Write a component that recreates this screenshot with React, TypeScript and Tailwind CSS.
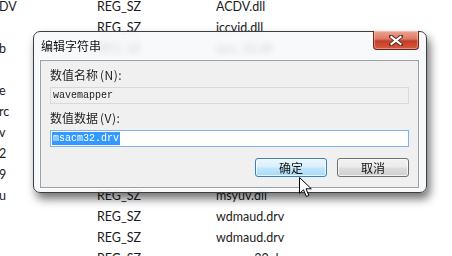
import React from "react";

const rows: [string, string, string][] = [
  ["DV", "REG_SZ", "ACDV.dll"],
  ["", "REG_SZ", "iccvid.dll"],
  ["b", "REG_SZ", "ipm_32.dll"],
  ["", "", ""],
  ["e", "", ""],
  ["rc", "", ""],
  ["v", "", ""],
  ["2", "", ""],
  ["9", "", ""],
  ["u", "REG_SZ", "msyuv.dll"],
  ["", "REG_SZ", "wdmaud.drv"],
  ["", "REG_SZ", "wdmaud.drv"],
  ["", "REG_SZ", "msacm32.drv"],
];

const cjk = "font-['Microsoft_YaHei','Noto_Sans_CJK_SC',sans-serif]";

export default function App() {
  return (
    <div className="relative w-[452px] h-[256px] overflow-hidden bg-white">
      {/* background registry list */}
      <div className="flex flex-col -mt-[3px] font-['Lato',sans-serif] text-[12.5px] text-[#1b1b1b]">
        {rows.map((r, i) => (
          <div key={i} className="flex h-[21px] items-center whitespace-nowrap">
            <div className="w-[97px] overflow-hidden">
              <span className="-ml-[1px] block">{r[0]}</span>
            </div>
            <div className="w-[119px]">{r[1]}</div>
            <div>{r[2]}</div>
          </div>
        ))}
      </div>

      {/* dialog */}
      <div className="absolute left-[33px] top-[31px] w-[394px] h-[162px] rounded-[7px] border border-[#3a3f46] bg-[rgba(246,248,250,0.84)] backdrop-blur-[3px] shadow-[3px_6px_10px_rgba(0,0,0,0.55)] flex flex-col pl-[6px] pr-[7px] pb-[4px]">
        <div className="relative h-[28px] flex items-start">
          <div className={`${cjk} text-[12px] text-[#111] leading-[16px] mt-[6px] ml-[1px]`}>编辑字符串</div>
          <div className="absolute right-0 top-[-1px] w-[46px] h-[19px] rounded-b-[4px] border border-t-0 border-[#6e2518] bg-[linear-gradient(to_bottom,#eba593_0%,#dc7863_45%,#c53c25_55%,#d65a40_100%)] shadow-[inset_0_0_0_1px_rgba(255,220,210,0.45)] flex items-center justify-center">
            <svg width="14" height="11" viewBox="0 0 14 11">
              <path d="M2 1.5 L12 9.5 M12 1.5 L2 9.5" stroke="#5a2a22" strokeWidth="4" strokeLinecap="square" />
              <path d="M2.5 2 L11.5 9 M11.5 2 L2.5 9" stroke="#fff" strokeWidth="2.2" strokeLinecap="square" />
            </svg>
          </div>
        </div>
        <div className="flex-1 border border-[#9c9fa3] bg-[#f0f0f0] px-[9px] flex flex-col shadow-[0_0_0_1px_#ffffff]">
          <div className={`${cjk} text-[12px] text-[#1e1e1e] leading-[16px] mt-[6px] flex`}>
            <span>数值名称</span>
            <span className="ml-[2px] tracking-[0.5px]">(N):</span>
          </div>
          <div className="mt-[4px] h-[17px] border border-[#d9d9d9] bg-[#f0f0f0] flex items-center pl-[2px] font-['Liberation_Mono',monospace] text-[10px] text-[#222]">
            wavemapper
          </div>
          <div className={`${cjk} text-[12px] text-[#1e1e1e] leading-[16px] mt-[6px] flex`}>
            <span>数值数据</span>
            <span className="ml-[2px] tracking-[0.5px]">(V):</span>
          </div>
          <div className="mt-[4px] h-[17px] border border-[#7eb4ea] bg-white flex items-center pl-[1px] font-['Liberation_Mono',monospace] text-[10px]">
            <span className="bg-[#3399ff] text-white h-[13px] leading-[13px] px-[1px]">msacm32.drv</span>
          </div>
          <div className="mt-[11px] flex justify-end gap-[10px]">
            <div className={`${cjk} w-[72px] h-[19px] rounded-[3px] border border-[#3c7fb1] bg-[linear-gradient(to_bottom,#eaf6fd_0%,#d9f0fc_45%,#bee6fd_55%,#a7d9f5_100%)] shadow-[inset_0_0_0_1px_rgba(255,255,255,0.7)] flex items-center justify-center text-[12px] text-[#111]`}>
              确定
            </div>
            <div className={`${cjk} w-[72px] h-[19px] rounded-[3px] border border-[#707070] bg-[linear-gradient(to_bottom,#f2f2f2_0%,#ebebeb_45%,#dddddd_55%,#cfcfcf_100%)] shadow-[inset_0_0_0_1px_rgba(255,255,255,0.7)] flex items-center justify-center text-[12px] text-[#111]`}>
              取消
            </div>
          </div>
        </div>
      </div>

      {/* mouse cursor */}
      <svg className="absolute left-[299px] top-[177px]" width="14" height="22" viewBox="0 0 14 22">
        <path d="M0.5 0.5 L0.5 16.5 L4.5 12.8 L7.3 19.5 L9.8 18.4 L7 11.8 L12.3 11.8 Z" fill="#fff" stroke="#000" strokeWidth="1" strokeLinejoin="miter" />
      </svg>
    </div>
  );
}
